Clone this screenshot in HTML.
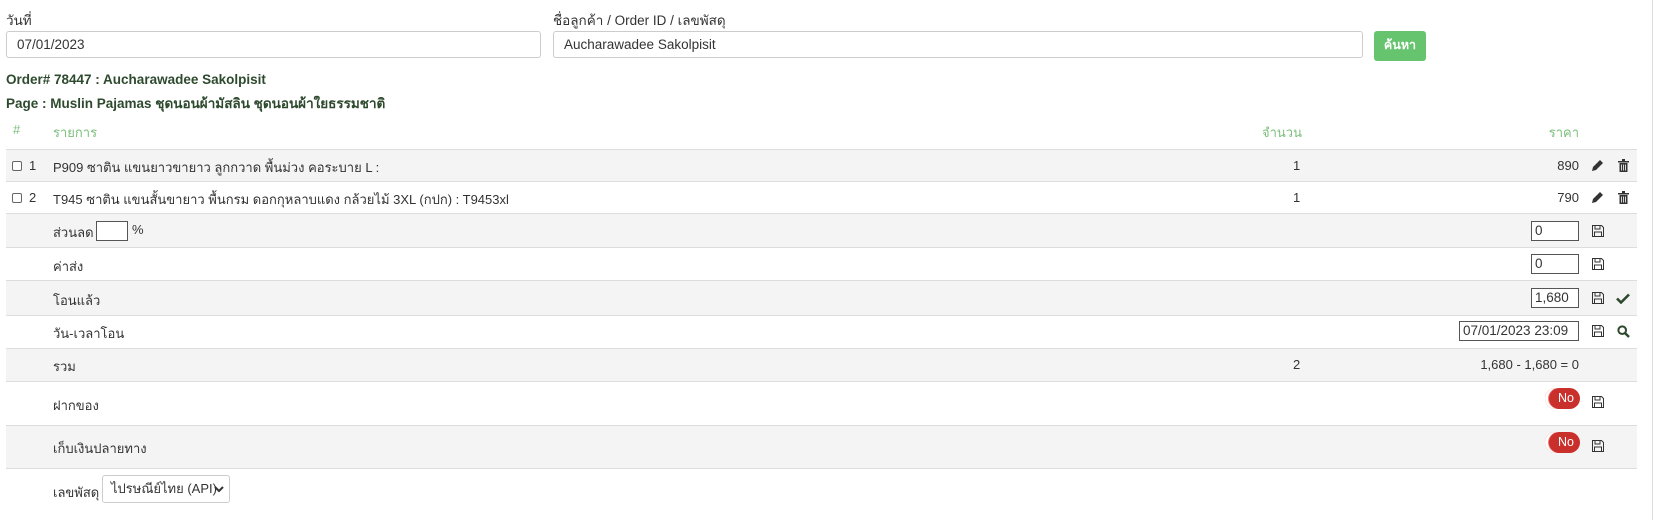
<!DOCTYPE html>
<html><head><meta charset="utf-8"><style>
*{box-sizing:border-box;margin:0;padding:0}
body{width:1654px;height:520px;background:#fff;font-family:"Liberation Sans","DejaVu Sans",sans-serif;font-size:13px;color:#333;position:relative;overflow:hidden}
.a{position:absolute;white-space:nowrap}
.r{position:absolute;right:75px;white-space:nowrap}
.inp{position:absolute;border:1px solid #ccc;border-radius:3px;background:#fff;padding:0 10px;line-height:26px;font-family:"Liberation Sans",sans-serif;font-size:13.5px;color:#333}
.row{position:absolute;left:6px;width:1631px;border-top:1px solid #ddd}
.g{background:#f4f4f4}
.sm{position:absolute;border:1px solid #555;background:#fff;height:20px;line-height:18px;padding-left:3px;font-family:"Liberation Sans",sans-serif;font-size:13.5px}
.tog{position:absolute;width:35px;height:21px;border-radius:11px;background:#c9302c;color:#fff;font-size:12.5px;line-height:21px;text-align:right;padding-right:6px;box-shadow:inset 3px 0 0 #fff,inset 4px 0 0 #e77}
.cb{position:absolute;width:10px;height:10px;border:1px solid #666;border-radius:2px;background:#fff}
svg{position:absolute}
</style></head><body>
<div class="a" style="left:6px;top:9px;font-size:13.5px">วันที่</div>
<div class="inp" style="left:6px;top:31px;width:535px;height:27px">07/01/2023</div>
<div class="a" style="left:553px;top:9px;font-size:13.5px">ชื่อลูกค้า / Order ID / เลขพัสดุ</div>
<div class="inp" style="left:553px;top:31px;width:810px;height:27px">Aucharawadee Sakolpisit</div>
<div class="a" style="left:1374px;top:31px;width:52px;height:30px;background:#66c46e;border-radius:3px;color:#fff;font-weight:bold;text-align:center;line-height:29px;font-size:12.5px">ค้นหา</div>
<div class="a" style="left:6px;top:72px;font-weight:bold;color:#2e4a2e;font-size:13.5px">Order# 78447 : Aucharawadee Sakolpisit</div>
<div class="a" style="left:6px;top:92px;font-weight:bold;color:#2e4a2e;font-size:13.5px">Page : Muslin Pajamas ชุดนอนผ้ามัสลิน ชุดนอนผ้าใยธรรมชาติ</div>
<div class="a" style="left:13px;top:122px;color:#7cbf7c">#</div>
<div class="a" style="left:53px;top:122px;color:#7cbf7c">รายการ</div>
<div class="a" style="left:1262px;top:122px;color:#7cbf7c">จำนวน</div>
<div class="r" style="top:122px;color:#7cbf7c">ราคา</div>

<div class="row g" style="top:149px;height:32px"></div>
<div class="row" style="top:181px;height:32px"></div>
<div class="row g" style="top:213px;height:34px"></div>
<div class="row" style="top:247px;height:33px"></div>
<div class="row g" style="top:280px;height:35px"></div>
<div class="row" style="top:315px;height:33px"></div>
<div class="row g" style="top:348px;height:33px"></div>
<div class="row" style="top:381px;height:44px"></div>
<div class="row g" style="top:425px;height:43px"></div>
<div class="row" style="top:468px;height:1px"></div>
<div class="a" style="left:1652px;top:0;width:1px;height:520px;background:#ddd"></div>

<div class="cb" style="left:12px;top:161px"></div><div class="a" style="left:29px;top:158px">1</div>
<div class="a" style="left:53px;top:157px">P909 ซาติน แขนยาวขายาว ลูกกวาด พื้นม่วง คอระบาย L :</div>
<div class="a" style="left:1293px;top:158px">1</div><div class="r" style="top:158px">890</div>
<div class="cb" style="left:12px;top:193px"></div><div class="a" style="left:29px;top:190px">2</div>
<div class="a" style="left:53px;top:189px">T945 ซาติน แขนสั้นขายาว พื้นกรม ดอกกุหลาบแดง กล้วยไม้ 3XL (กปก) : T9453xl</div>
<div class="a" style="left:1293px;top:190px">1</div><div class="r" style="top:190px">790</div>

<div class="a" style="left:53px;top:222px">ส่วนลด</div>
<div class="sm" style="left:96px;top:221px;width:32px"></div><div class="a" style="left:132px;top:222px">%</div>
<div class="a" style="left:53px;top:256px">ค่าส่ง</div>
<div class="a" style="left:53px;top:290px">โอนแล้ว</div>
<div class="a" style="left:53px;top:323px">วัน-เวลาโอน</div>
<div class="a" style="left:53px;top:356px">รวม</div>
<div class="a" style="left:1293px;top:357px">2</div>
<div class="r" style="top:357px">1,680 - 1,680 = 0</div>
<div class="a" style="left:53px;top:395px">ฝากของ</div>
<div class="a" style="left:53px;top:438px">เก็บเงินปลายทาง</div>
<div class="a" style="left:53px;top:482px">เลขพัสดุ</div>
<div class="a" style="left:102px;top:475px;width:128px;height:28px;border:1px solid #ccc;border-radius:3px;padding-left:8px;line-height:26px">ไปรษณีย์ไทย (API)</div>
<svg style="left:214px;top:485px" width="10" height="8" viewBox="0 0 10 8"><path d="M1 2l4 4 4-4" stroke="#333" stroke-width="2" fill="none"/></svg>

<div class="sm" style="left:1531px;top:221px;width:48px">0</div>
<div class="sm" style="left:1531px;top:254px;width:48px">0</div>
<div class="sm" style="left:1531px;top:288px;width:48px">1,680</div>
<div class="sm" style="left:1459px;top:321px;width:120px">07/01/2023 23:09</div>
<div class="tog" style="left:1545px;top:388px">No</div>
<div class="tog" style="left:1545px;top:432px">No</div>

<svg style="left:1591px;top:159px" width="13" height="13" viewBox="0 0 13 13"><path d="M1 12l1-4 7-7 3 3-7 7z" fill="#333"/></svg>
<svg style="left:1591px;top:191px" width="13" height="13" viewBox="0 0 13 13"><path d="M1 12l1-4 7-7 3 3-7 7z" fill="#333"/></svg>
<svg style="left:1618px;top:159px" width="11" height="13" viewBox="0 0 11 13"><path d="M0 2h11v1.5H0zM4 0h3v2H4zM1.5 4h8v9h-8z" fill="#333"/><path d="M3.5 5.5v6M5.5 5.5v6M7.5 5.5v6" stroke="#fff" stroke-width=".8"/></svg>
<svg style="left:1618px;top:191px" width="11" height="13" viewBox="0 0 11 13"><path d="M0 2h11v1.5H0zM4 0h3v2H4zM1.5 4h8v9h-8z" fill="#333"/><path d="M3.5 5.5v6M5.5 5.5v6M7.5 5.5v6" stroke="#fff" stroke-width=".8"/></svg>
<svg style="left:1592px;top:225px" width="12" height="12" viewBox="0 0 12 12"><path d="M.5.5h9l2 2v9H.5z M3 .5v3.5h5V.5 M2.5 11.5V7h7v4.5" fill="none" stroke="#333"/></svg>
<svg style="left:1592px;top:258px" width="12" height="12" viewBox="0 0 12 12"><path d="M.5.5h9l2 2v9H.5z M3 .5v3.5h5V.5 M2.5 11.5V7h7v4.5" fill="none" stroke="#333"/></svg>
<svg style="left:1592px;top:292px" width="12" height="12" viewBox="0 0 12 12"><path d="M.5.5h9l2 2v9H.5z M3 .5v3.5h5V.5 M2.5 11.5V7h7v4.5" fill="none" stroke="#333"/></svg>
<svg style="left:1592px;top:325px" width="12" height="12" viewBox="0 0 12 12"><path d="M.5.5h9l2 2v9H.5z M3 .5v3.5h5V.5 M2.5 11.5V7h7v4.5" fill="none" stroke="#333"/></svg>
<svg style="left:1592px;top:396px" width="12" height="12" viewBox="0 0 12 12"><path d="M.5.5h9l2 2v9H.5z M3 .5v3.5h5V.5 M2.5 11.5V7h7v4.5" fill="none" stroke="#333"/></svg>
<svg style="left:1592px;top:440px" width="12" height="12" viewBox="0 0 12 12"><path d="M.5.5h9l2 2v9H.5z M3 .5v3.5h5V.5 M2.5 11.5V7h7v4.5" fill="none" stroke="#333"/></svg>
<svg style="left:1616px;top:293px" width="14" height="11" viewBox="0 0 14 11"><path d="M1 5.5l4 4 8-8" stroke="#2e4a2e" stroke-width="2.6" fill="none"/></svg>
<svg style="left:1617px;top:325px" width="13" height="13" viewBox="0 0 13 13"><circle cx="5.2" cy="5.2" r="3.8" stroke="#2e4a2e" stroke-width="2" fill="none"/><path d="M8 8l4 4" stroke="#2e4a2e" stroke-width="2.4"/></svg>
</body></html>
